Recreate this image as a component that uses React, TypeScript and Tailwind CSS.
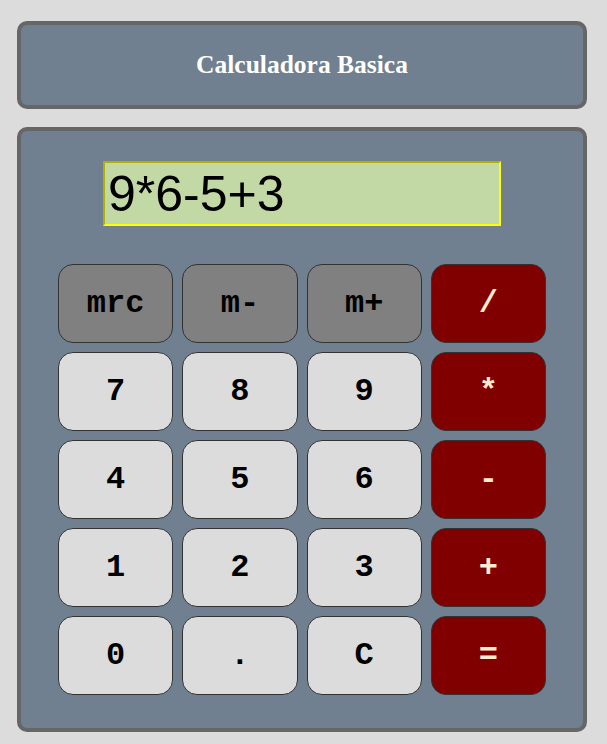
import React from "react";

const rows: { label: string; kind: "mem" | "num" | "op" }[][] = [
  [
    { label: "mrc", kind: "mem" },
    { label: "m-", kind: "mem" },
    { label: "m+", kind: "mem" },
    { label: "/", kind: "op" },
  ],
  [
    { label: "7", kind: "num" },
    { label: "8", kind: "num" },
    { label: "9", kind: "num" },
    { label: "*", kind: "op" },
  ],
  [
    { label: "4", kind: "num" },
    { label: "5", kind: "num" },
    { label: "6", kind: "num" },
    { label: "-", kind: "op" },
  ],
  [
    { label: "1", kind: "num" },
    { label: "2", kind: "num" },
    { label: "3", kind: "num" },
    { label: "+", kind: "op" },
  ],
  [
    { label: "0", kind: "num" },
    { label: ".", kind: "num" },
    { label: "C", kind: "num" },
    { label: "=", kind: "op" },
  ],
];

const kindClass = {
  mem: "bg-[#808080] text-black",
  num: "bg-[#dcdcdc] text-black",
  op: "bg-[#800000] text-[#ffebcd]",
};

export default function App() {
  return (
    <div className="min-h-[744px] w-full bg-[#dcdcdc] pl-[17px] pr-[20px] pt-[21px]">
      <div className="flex h-[88px] items-center justify-center rounded-[10px] border-4 border-[#666666] bg-[#708090]">
        <h1 className="font-['Liberation_Serif',serif] text-[25.5px] font-bold text-white">
          Calculadora Basica
        </h1>
      </div>
      <div className="mt-[18px] flex h-[605px] flex-col items-center rounded-[10px] border-4 border-[#666666] bg-[#708090] pt-[30px]">
        <div className="flex h-[65px] w-[398px] items-center border-2 border-t-[#b0b000] border-l-[#b0b000] border-r-[#ffff00] border-b-[#ffff00] bg-[#c3d9a5] pl-[3px] font-['Liberation_Sans',Arial,sans-serif] text-[50px] leading-none text-black">
          9*6-5+3
        </div>
        <div className="mt-[38px] grid w-[488px] grid-cols-4 gap-[9px]">
          {rows.flat().map((b, i) => (
            <button
              key={i}
              className={`flex h-[79px] items-center justify-center rounded-[15px] border border-[#333333] font-['Liberation_Mono','Courier_New',monospace] text-[32px] font-bold ${kindClass[b.kind]}`}
            >
              {b.label}
            </button>
          ))}
        </div>
      </div>
    </div>
  );
}
